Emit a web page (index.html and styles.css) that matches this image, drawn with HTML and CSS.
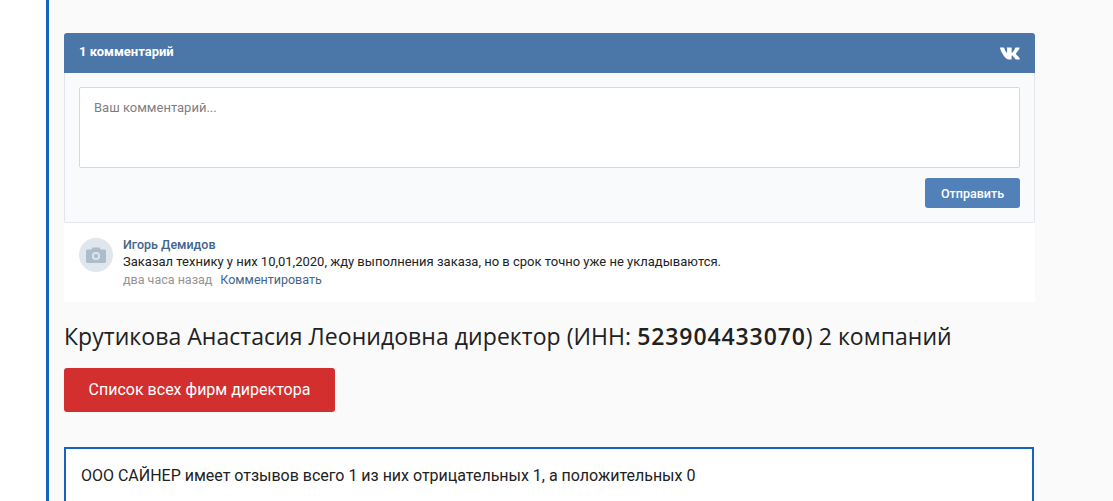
FILE: index.html
```html
<!DOCTYPE html>
<html lang="ru">

<head>
    <meta charset="UTF-8" />
    <title>Крутикова Анастасия Леонидовна</title>
    <link rel="stylesheet" href="styles.css">
</head>

<body>
    <div class="content">
        <div class="vk-widget">
            <div class="vk-head">
                <span class="vk-count">1 комментарий</span>
                <svg class="vk-logo" viewBox="0 0 22 13" width="21" height="13" aria-hidden="true">
                    <path fill="#fff" d="M0.3 0.3h3.5c0.3 0 0.5 0.2 0.6 0.5 0.7 2 1.9 4.6 3 5.3V0.9c0-0.4-0.2-0.6-0.9-0.6h5.3c0.3 0 0.4 0.2 0.4 0.5v4.5c0 0.4 0.3 0.5 0.5 0.4 0.9-0.5 2.4-2.8 3.2-4.9 0.1-0.3 0.3-0.5 0.7-0.5h3.3c0.6 0 0.7 0.3 0.6 0.7-0.5 1.7-3.6 5.2-3.6 5.2-0.3 0.4-0.3 0.6 0 1 0.8 1 3.2 3.3 3.9 4.7 0.2 0.5 0 0.8-0.5 0.8h-3.5c-0.5 0-0.7-0.2-1-0.6-1-1.3-2.1-2.7-3-3.4-0.3-0.2-0.6-0.1-0.6 0.3v3c0 0.4-0.2 0.7-0.7 0.7h-2C5.500 12.700 1.800 6.500 0 1 -0.100 0.600 0 0.300 0.300 0.300z" />
                </svg>
            </div>
            <div class="vk-form">
                <div class="vk-input">Ваш комментарий...</div>
                <div class="vk-actions">
                    <button class="vk-send">Отправить</button>
                </div>
            </div>
            <div class="vk-post">
                <div class="vk-avatar">
                    <svg viewBox="0 0 20 16" width="20" height="16" aria-hidden="true">
                        <path fill="#abbccd" fill-rule="evenodd" d="M6.500 0.500h7l1.200 2H18.500a1.500 1.500 0 0 1 1.500 1.500v10.500a1.500 1.500 0 0 1-1.500 1.500H1.500a1.500 1.500 0 0 1-1.500-1.500V4a1.500 1.500 0 0 1 1.500-1.500h3.800zM10 5a4 4 0 1 0 0 8 4 4 0 0 0 0-8zM10 6.800a2.200 2.200 0 1 1 0 4.400 2.200 2.200 0 0 1 0-4.400z" />
                    </svg>
                </div>
                <div class="vk-post-body">
                    <a class="vk-author" href="#">Игорь Демидов</a>
                    <p class="vk-text">Заказал технику у них 10,01,2020, жду выполнения заказа, но в срок точно уже не укладываются.</p>
                    <div class="vk-meta"><span class="vk-time">два часа назад</span><a class="vk-reply" href="#">Комментировать</a></div>
                </div>
            </div>
        </div>

        <h2 class="director">Крутикова Анастасия Леонидовна директор (ИНН: <b>523904433070</b>) 2 компаний</h2>
        <a class="btn-red" href="#">Список всех фирм директора</a>

        <div class="review-box">ООО САЙНЕР имеет отзывов всего 1 из них отрицательных 1, а положительных 0</div>
    </div>
</body>

</html>
```

FILE: styles.css
```css
html,
body {
    height: 100%;
}

body {
    margin: 0;
    background-color: #fff;
    font-family: Roboto, sans-serif;
    color: #212121;
    overflow: hidden;
}

a {
    text-decoration: none;
}

.content {
    margin-left: 46px;
    height: 100%;
    padding: 33px 0 0 15px;
    border-left: 3px solid #1565c0;
    background-color: #fafafa;
    box-sizing: border-box;
    overflow: hidden;
}

.vk-widget {
    width: 971px;
    font-size: 12.5px;
}

.vk-head {
    display: flex;
    justify-content: space-between;
    align-items: center;
    height: 40px;
    padding: 0 14px 0 15px;
    background-color: #4a76a8;
    border-radius: 3px 3px 0 0;
    box-sizing: border-box;
}

.vk-count {
    margin-bottom: 4px;
    color: #fff;
    font-weight: 700;
    font-size: 13px;
}

.vk-form {
    height: 150px;
    padding: 14px 14px 0 14px;
    background-color: #f9fafc;
    border: solid #e3e7ed;
    border-width: 0 1px 1px 1px;
    border-radius: 0 0 2px 2px;
    box-sizing: border-box;
}

.vk-input {
    height: 81px;
    padding: 12px 14px;
    background-color: #fff;
    border: 1px solid #d3d9de;
    border-radius: 2px;
    box-sizing: border-box;
    color: #7f7f7f;
    font-size: 13px;
    line-height: 15px;
}

.vk-actions {
    display: flex;
    justify-content: flex-end;
    margin-top: 10px;
}

.vk-send {
    width: 95px;
    height: 30px;
    padding: 0;
    border: none;
    border-radius: 3px;
    background-color: #5181b8;
    color: #fff;
    font-family: Roboto, sans-serif;
    font-size: 12.5px;
    font-weight: 500;
}

.vk-post {
    display: flex;
    height: 79px;
    padding: 13px 15px 0;
    background-color: #fff;
    box-sizing: border-box;
}

.vk-avatar {
    display: flex;
    justify-content: center;
    align-items: center;
    flex-shrink: 0;
    width: 34px;
    height: 34px;
    margin: 2px 10px 0 0;
    border-radius: 50%;
    background-color: #e1e6ed;
}

.vk-post-body {
    line-height: 17px;
}

.vk-author {
    display: block;
    color: #42648b;
    font-weight: 500;
}

.vk-text {
    margin: 0;
    color: #222;
    font-size: 13px;
}

.vk-meta {
    margin-top: 1px;
}

.vk-time {
    margin-right: 8px;
    color: #939393;
}

.vk-reply {
    color: #42648b;
}

.director {
    margin: 20px 0 0;
    font-family: "Open Sans", sans-serif;
    font-size: 23px;
    font-weight: 400;
    line-height: 28px;
    letter-spacing: 0.05px;
    color: #212121;
}

.director b {
    font-weight: 600;
    letter-spacing: 0.9px;
}

.btn-red {
    display: block;
    width: 271px;
    height: 44px;
    margin-top: 18px;
    background-color: #d32f2f;
    border-radius: 3px;
    color: #fff;
    font-size: 16px;
    line-height: 44px;
    text-align: center;
}

.review-box {
    width: 970px;
    height: 120px;
    margin-top: 35px;
    padding: 16px 15px;
    background-color: #fff;
    border: 2px solid #1565c0;
    box-sizing: border-box;
    font-size: 16px;
    line-height: 22px;
    letter-spacing: -0.01px;
    color: #212121;
}
```
